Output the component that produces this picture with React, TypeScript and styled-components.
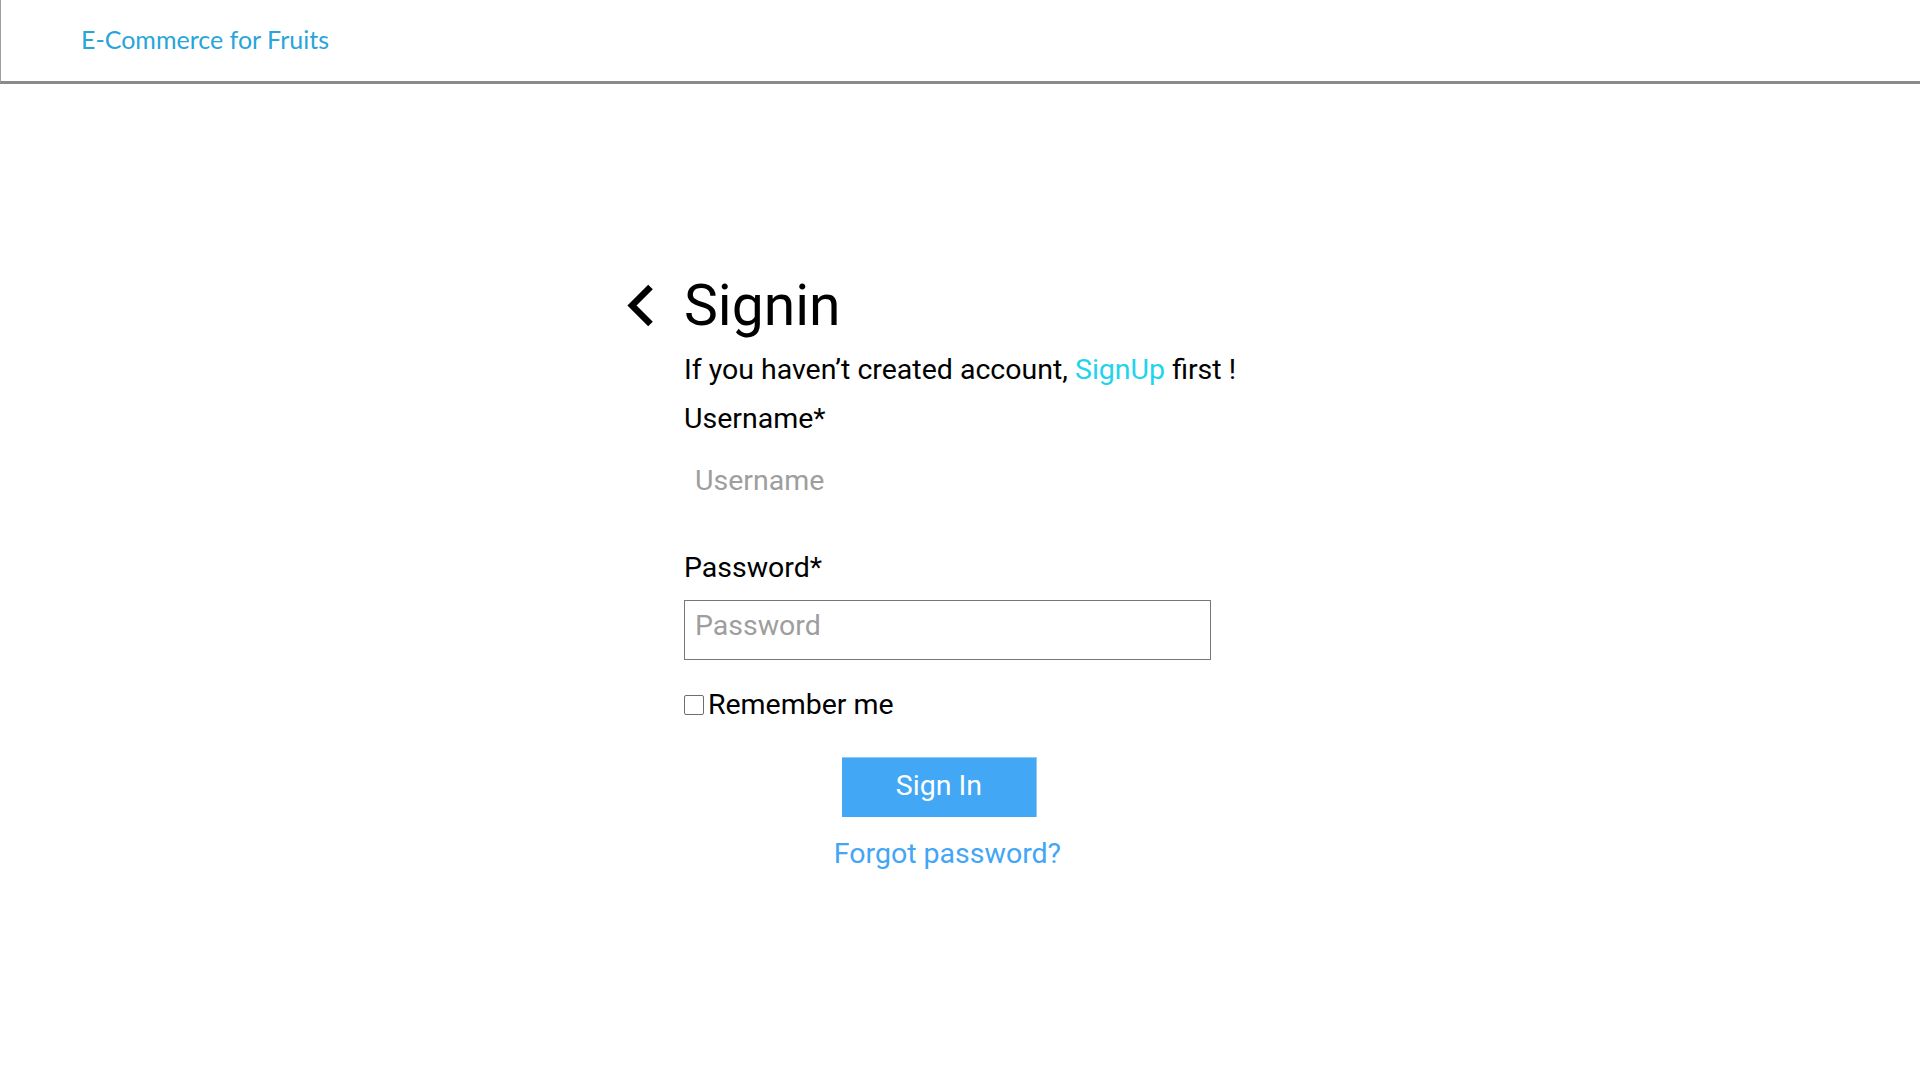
import React from "react";
import styled, { createGlobalStyle } from "styled-components";

const GlobalStyle = createGlobalStyle`
  html, body {
    margin: 0;
    padding: 0;
    background: #ffffff;
  }
  body {
    font-family: Roboto, "Liberation Sans", Arial, sans-serif;
    color: #000000;
  }
  * {
    box-sizing: border-box;
  }
`;

const Header = styled.header`
  height: 84px;
  display: flex;
  align-items: center;
  padding-left: 80px;
  border-left: 1px solid #a0a0a0;
  border-bottom: 3px solid #8a8a8a;
`;

const Brand = styled.a`
  font-family: Lato, "Liberation Sans", sans-serif;
  font-size: 25px;
  line-height: 30px;
  color: #29a5da;
  text-decoration: none;
  margin-top: -3px;
`;

const Main = styled.main`
  display: flex;
  justify-content: center;
  padding-top: 189px;
`;

const Panel = styled.section`
  display: flex;
  flex-direction: column;
  align-items: flex-start;
  width: max-content;
`;

const TitleRow = styled.div`
  display: flex;
  align-items: center;
  gap: 30px;
  margin-left: -57px;
`;

const BackButton = styled.button`
  display: flex;
  align-items: center;
  justify-content: center;
  width: 27px;
  height: 43px;
  margin-top: -2px;
  padding: 0;
  border: none;
  background: transparent;
  cursor: pointer;
`;

const Title = styled.h1`
  margin: 0;
  font-size: 57px;
  font-weight: 400;
  line-height: 66px;
`;

const Subtitle = styled.p`
  margin: 14px 0 0;
  font-size: 28.5px;
  line-height: 33px;
`;

const SignUpLink = styled.a`
  color: #22d3ee;
  text-decoration: none;
`;

const Form = styled.form`
  display: flex;
  flex-direction: column;
  width: 527px;
`;

const Field = styled.div<{ $top: number }>`
  display: flex;
  flex-direction: column;
  margin-top: ${(p) => p.$top}px;
`;

const Label = styled.label`
  font-size: 28.5px;
  line-height: 33px;
  margin-bottom: 16px;
`;

const TextInput = styled.input<{ $plain?: boolean }>`
  width: 100%;
  height: 60px;
  margin: ${(p) => (p.$plain ? "4px 0 0" : "0")};
  padding: 8px 10px 18px;
  border: 1px solid ${(p) => (p.$plain ? "transparent" : "#777777")};
  border-radius: 0;
  background: #ffffff;
  font-family: Roboto, "Liberation Sans", Arial, sans-serif;
  font-size: 28.5px;
  line-height: 32px;
  color: #000000;
  outline: none;

  &::placeholder {
    color: #9e9e9e;
  }
`;

const RememberRow = styled.label`
  display: flex;
  align-items: center;
  gap: 4px;
  margin-top: 28px;
  font-size: 28.5px;
  line-height: 33px;
`;

const CheckBox = styled.input`
  appearance: none;
  width: 20px;
  height: 20px;
  margin: 0;
  border: 1.5px solid #6e6e6e;
  border-radius: 2px;
  background: #ffffff;
`;

const ButtonRow = styled.div`
  display: flex;
  justify-content: center;
  margin-top: 36px;
`;

const SubmitButton = styled.button`
  width: 195px;
  height: 60px;
  margin-right: 16px;
  padding: 0 0 4px;
  border: none;
  border-top: 1px solid #8fcaf8;
  border-right: 1px solid #8fcaf8;
  background: #42a8f5;
  color: #ffffff;
  font-family: Roboto, "Liberation Sans", Arial, sans-serif;
  font-size: 28.5px;
  line-height: 33px;
  cursor: pointer;
`;

const ForgotLink = styled.a`
  align-self: center;
  margin-top: 20px;
  font-size: 28.5px;
  line-height: 33px;
  color: #42a5f5;
  text-decoration: none;
`;

const ChevronLeft = () => (
  <svg width="27" height="43" viewBox="0 0 27 43" aria-hidden="true">
    <polyline
      points="23.5,3 5,21.5 23.5,40"
      fill="none"
      stroke="#000000"
      strokeWidth="6.5"
      strokeLinejoin="miter"
      strokeLinecap="butt"
    />
  </svg>
);

export default function App() {
  return (
    <>
      <GlobalStyle />
      <Header>
        <Brand href="#">E-Commerce for Fruits</Brand>
      </Header>
      <Main>
        <Panel>
          <TitleRow>
            <BackButton type="button" aria-label="Back">
              <ChevronLeft />
            </BackButton>
            <Title>Signin</Title>
          </TitleRow>
          <Subtitle>
            If you haven’t created account, <SignUpLink href="#">SignUp</SignUpLink> first !
          </Subtitle>
          <Form onSubmit={(e) => e.preventDefault()}>
            <Field $top={16}>
              <Label htmlFor="username">Username*</Label>
              <TextInput id="username" $plain placeholder="Username" />
            </Field>
            <Field $top={36}>
              <Label htmlFor="password">Password*</Label>
              <TextInput id="password" type="password" placeholder="Password" />
            </Field>
            <RememberRow>
              <CheckBox type="checkbox" />
              Remember me
            </RememberRow>
            <ButtonRow>
              <SubmitButton type="submit">Sign In</SubmitButton>
            </ButtonRow>
            <ForgotLink href="#">Forgot password?</ForgotLink>
          </Form>
        </Panel>
      </Main>
    </>
  );
}
